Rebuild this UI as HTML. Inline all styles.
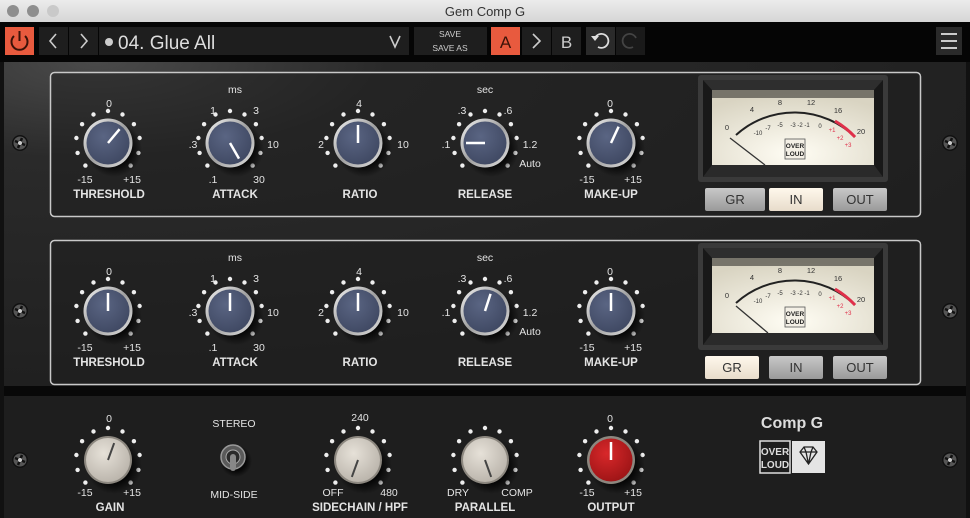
<!DOCTYPE html>
<html><head><meta charset="utf-8"><style>
html,body{margin:0;padding:0;width:970px;height:518px;overflow:hidden;background:#000}
svg{display:block}
text{font-family:"Liberation Sans",sans-serif}
</style></head><body>
<svg width="970" height="518" viewBox="0 0 970 518" xmlns="http://www.w3.org/2000/svg">
<defs>
<linearGradient id="tb" x1="0" y1="0" x2="0" y2="1"><stop offset="0" stop-color="#ececec"/><stop offset="1" stop-color="#d6d6d6"/></linearGradient>
<radialGradient id="panel" cx="0.1" cy="0" r="1"><stop offset="0" stop-color="#4a4a4a"/><stop offset="0.3" stop-color="#2a2a2a"/><stop offset="1" stop-color="#202020"/></radialGradient>
<linearGradient id="ring" x1="0" y1="0" x2="1" y2="1"><stop offset="0" stop-color="#f4f4f4"/><stop offset="0.5" stop-color="#a0a0a0"/><stop offset="1" stop-color="#e0e0e0"/></linearGradient>
<radialGradient id="blue" cx="0.4" cy="0.35" r="0.7"><stop offset="0" stop-color="#5a6583"/><stop offset="1" stop-color="#3f4862"/></radialGradient>
<radialGradient id="cream" cx="0.4" cy="0.35" r="0.7"><stop offset="0" stop-color="#e6e1d8"/><stop offset="1" stop-color="#b9b3aa"/></radialGradient>
<radialGradient id="red" cx="0.4" cy="0.35" r="0.7"><stop offset="0" stop-color="#d8282a"/><stop offset="1" stop-color="#9c1416"/></radialGradient>
<radialGradient id="face" cx="0.5" cy="0.85" r="0.8"><stop offset="0" stop-color="#fffdf4"/><stop offset="1" stop-color="#d9d4c2"/></radialGradient>
<radialGradient id="shadow" cx="0.5" cy="0.5" r="0.5"><stop offset="0.6" stop-color="#000" stop-opacity="0.8"/><stop offset="1" stop-color="#000" stop-opacity="0"/></radialGradient>
<linearGradient id="btn" x1="0" y1="0" x2="0" y2="1"><stop offset="0" stop-color="#c8c8c8"/><stop offset="1" stop-color="#9a9a9a"/></linearGradient>
<linearGradient id="btnOn" x1="0" y1="0" x2="0" y2="1"><stop offset="0" stop-color="#fff8ec"/><stop offset="1" stop-color="#e8dccb"/></linearGradient>
<g id="dots" fill="#eee">
<circle cx="-22.6" cy="22.6" r="2.2"/><circle cx="-30.4" cy="9.9" r="2.2"/><circle cx="-31.6" cy="-5" r="2.2"/><circle cx="-25.9" cy="-18.8" r="2.2"/><circle cx="-14.5" cy="-28.5" r="2.2"/><circle cx="0" cy="-32" r="2.2"/><circle cx="14.5" cy="-28.5" r="2.2"/><circle cx="25.9" cy="-18.8" r="2.2"/><circle cx="31.6" cy="-5" r="2.2"/><circle cx="30.4" cy="9.9" r="2.2"/><circle cx="22.6" cy="22.6" r="2.2"/>
</g>
<g id="kb"><circle cx="6" cy="6" r="28" fill="url(#shadow)"/><circle r="24.5" fill="url(#ring)"/><circle r="21.5" fill="url(#blue)"/></g>
<g id="kc"><circle cx="6" cy="6" r="28" fill="url(#shadow)"/><circle r="24" fill="#8c877f"/><circle r="22" fill="url(#cream)"/></g>
<g id="kr"><circle cx="6" cy="6" r="28" fill="url(#shadow)"/><circle r="24" fill="#8c877f"/><circle r="21.5" fill="url(#red)"/></g>
<g id="screw"><circle r="8" fill="#111"/><circle r="6.5" fill="#555"/><path d="M-5 -2 L5 2 M-2 5 L2 -5" stroke="#111" stroke-width="2.5"/><circle r="2" fill="#ccc"/></g>
</defs>

<rect x="0" y="0" width="970" height="22" fill="url(#tb)"/>
<circle cx="13" cy="11" r="6" fill="#8e8e8e"/><circle cx="33" cy="11" r="6" fill="#8e8e8e"/><circle cx="53" cy="11" r="6" fill="#c9c9c9"/>
<text x="485" y="16" text-anchor="middle" font-size="13" fill="#333">Gem Comp G</text>
<rect x="0" y="22" width="970" height="40" fill="#050505"/>
<rect x="5" y="27" width="29" height="28" fill="#e85a3e"/>
<path d="M14 36 A8 8 0 1 0 25 36" fill="none" stroke="#3a1208" stroke-width="2"/><line x1="19.5" y1="31" x2="19.5" y2="41" stroke="#3a1208" stroke-width="2"/>
<rect x="39" y="27" width="29" height="28" fill="#1e1e1e"/><rect x="69" y="27" width="29" height="28" fill="#1e1e1e"/>
<path d="M56 34 L50 41 L56 48" fill="none" stroke="#ccc" stroke-width="1.6"/><path d="M81 34 L87 41 L81 48" fill="none" stroke="#ccc" stroke-width="1.6"/>
<rect x="99" y="27" width="310" height="28" fill="#1e1e1e"/>
<circle cx="109" cy="42" r="4" fill="#ccc"/>
<text x="118" y="49" font-size="19" fill="#ddd">04. Glue All</text>
<path d="M390 36 L395 47 L400 36" fill="none" stroke="#ccc" stroke-width="1.6"/>
<rect x="414" y="27" width="73" height="28" fill="#1e1e1e"/>
<text x="450" y="37" text-anchor="middle" font-size="8.5" fill="#ccc">SAVE</text>
<text x="450" y="51" text-anchor="middle" font-size="8.5" fill="#ccc">SAVE AS</text>
<rect x="491" y="27" width="29" height="28" fill="#e85a3e"/>
<text x="505.5" y="48" text-anchor="middle" font-size="17" fill="#3a1208">A</text>
<rect x="522" y="27" width="29" height="28" fill="#1e1e1e"/>
<path d="M533 34 L540 41 L533 48" fill="none" stroke="#ccc" stroke-width="1.6"/>
<rect x="552" y="27" width="29" height="28" fill="#1e1e1e"/>
<text x="566.5" y="48" text-anchor="middle" font-size="17" fill="#ccc">B</text>
<rect x="586" y="27" width="29" height="28" fill="#2a2a2a"/>
<path d="M595 38 A7 7 0 1 1 598 47" fill="none" stroke="#ddd" stroke-width="1.8"/><path d="M591 36 L595 41 L599 36" fill="#ddd"/>
<rect x="616" y="27" width="29" height="28" fill="#1a1a1a"/>
<path d="M636 38 A7 7 0 1 0 633 47" fill="none" stroke="#444" stroke-width="1.8"/>
<rect x="936" y="27" width="26" height="28" fill="#2a2a2a"/>
<path d="M941 34 H957 M941 41 H957 M941 48 H957" stroke="#ccc" stroke-width="2"/>

<rect x="0" y="62" width="970" height="324" fill="url(#panel)"/>
<rect x="0" y="386" width="970" height="10" fill="#080808"/>
<rect x="0" y="396" width="970" height="122" fill="#1e1e1e"/>
<rect x="0" y="62" width="4" height="456" fill="#111"/><rect x="966" y="62" width="4" height="456" fill="#111"/>

<rect x="50.5" y="72.5" width="870" height="144" rx="4" fill="#1d1d1d" fill-opacity="0.5" stroke="#c8c8c8" stroke-width="1.5"/>
<rect x="50.5" y="240.5" width="870" height="144" rx="4" fill="#1d1d1d" fill-opacity="0.5" stroke="#c8c8c8" stroke-width="1.5"/>

<use href="#screw" x="20" y="143"/><use href="#screw" x="950" y="143"/>
<use href="#screw" x="20" y="311"/><use href="#screw" x="950" y="311"/>
<use href="#screw" x="20" y="460"/><use href="#screw" x="950" y="460"/>

<g fill="#e4e4e4" font-size="10.5" text-anchor="middle">
<g transform="translate(108,143)"><use href="#dots"/><use href="#kb"/><line x1="0" y1="0" x2="0" y2="-18" stroke="#fff" stroke-width="2.5" transform="rotate(40)"/></g>
<g transform="translate(230,143)"><use href="#dots"/><use href="#kb"/><line x1="0" y1="0" x2="0" y2="-18" stroke="#fff" stroke-width="2.5" transform="rotate(150)"/></g>
<g transform="translate(358,143)"><use href="#dots"/><use href="#kb"/><line x1="0" y1="0" x2="0" y2="-18" stroke="#fff" stroke-width="2.5"/></g>
<g transform="translate(485,143)"><use href="#dots"/><use href="#kb"/><line x1="0" y1="0" x2="0" y2="-19" stroke="#fff" stroke-width="2.5" transform="rotate(-90)"/></g>
<g transform="translate(611,143)"><use href="#dots"/><use href="#kb"/><line x1="0" y1="0" x2="0" y2="-18" stroke="#fff" stroke-width="2.5" transform="rotate(25)"/></g>
<text x="109" y="107">0</text><text x="85" y="183">-15</text><text x="132" y="183">+15</text>
<text x="235" y="93">ms</text><text x="213" y="114">1</text><text x="256" y="114">3</text><text x="193" y="148">.3</text><text x="273" y="148">10</text><text x="213" y="183">.1</text><text x="259" y="183">30</text>
<text x="359" y="107">4</text><text x="321" y="148">2</text><text x="403" y="148">10</text>
<text x="485" y="93">sec</text><text x="462" y="114">.3</text><text x="508" y="114">.6</text><text x="446" y="148">.1</text><text x="530" y="148">1.2</text><text x="530" y="167">Auto</text>
<text x="610" y="107">0</text><text x="587" y="183">-15</text><text x="633" y="183">+15</text>
<g font-weight="bold" font-size="11.5">
<text x="109" y="198">THRESHOLD</text><text x="235" y="198">ATTACK</text><text x="360" y="198">RATIO</text><text x="485" y="198">RELEASE</text><text x="611" y="198">MAKE-UP</text>
</g>

<g transform="translate(108,311)"><use href="#dots"/><use href="#kb"/><line x1="0" y1="0" x2="0" y2="-18" stroke="#fff" stroke-width="2.5"/></g>
<g transform="translate(230,311)"><use href="#dots"/><use href="#kb"/><line x1="0" y1="0" x2="0" y2="-18" stroke="#fff" stroke-width="2.5"/></g>
<g transform="translate(358,311)"><use href="#dots"/><use href="#kb"/><line x1="0" y1="0" x2="0" y2="-18" stroke="#fff" stroke-width="2.5"/></g>
<g transform="translate(485,311)"><use href="#dots"/><use href="#kb"/><line x1="0" y1="0" x2="0" y2="-18" stroke="#fff" stroke-width="2.5" transform="rotate(18)"/></g>
<g transform="translate(611,311)"><use href="#dots"/><use href="#kb"/><line x1="0" y1="0" x2="0" y2="-18" stroke="#fff" stroke-width="2.5"/></g>
<text x="109" y="275">0</text><text x="85" y="351">-15</text><text x="132" y="351">+15</text>
<text x="235" y="261">ms</text><text x="213" y="282">1</text><text x="256" y="282">3</text><text x="193" y="316">.3</text><text x="273" y="316">10</text><text x="213" y="351">.1</text><text x="259" y="351">30</text>
<text x="359" y="275">4</text><text x="321" y="316">2</text><text x="403" y="316">10</text>
<text x="485" y="261">sec</text><text x="462" y="282">.3</text><text x="508" y="282">.6</text><text x="446" y="316">.1</text><text x="530" y="316">1.2</text><text x="530" y="335">Auto</text>
<text x="610" y="275">0</text><text x="587" y="351">-15</text><text x="633" y="351">+15</text>
<g font-weight="bold" font-size="11.5">
<text x="109" y="366">THRESHOLD</text><text x="235" y="366">ATTACK</text><text x="360" y="366">RATIO</text><text x="485" y="366">RELEASE</text><text x="611" y="366">MAKE-UP</text>
</g>
</g>

<g id="meter">
<rect x="698" y="75" width="190" height="107" rx="3" fill="#3a3a3a"/>
<rect x="703" y="80" width="180" height="97" fill="#181818"/>
<path d="M703 80 H883 L874 90 H712 Z" fill="#2e2e2e"/>
<path d="M703 177 H883 L874 165 H712 Z" fill="#2a2a2a"/>
<rect x="712" y="90" width="162" height="75" fill="url(#face)"/>
<rect x="712" y="90" width="162" height="8" fill="#000" fill-opacity="0.45"/>
<path d="M736 135 A87 87 0 0 1 855 137" fill="none" stroke="#222" stroke-width="2"/>
<path d="M835 121 A87 87 0 0 1 855 137" fill="none" stroke="#e0304a" stroke-width="3"/>
<g font-size="7.5" fill="#333" text-anchor="middle">
<text x="727" y="130">0</text><text x="752" y="112">4</text><text x="780" y="105">8</text><text x="811" y="105">12</text><text x="838" y="113">16</text><text x="861" y="134">20</text>
<text x="758" y="135" font-size="6">-10</text><text x="768" y="130" font-size="6">-7</text><text x="780" y="127" font-size="6">-5</text><text x="800" y="127" font-size="6">-3 -2 -1</text><text x="820" y="128" font-size="6">0</text>
<text x="832" y="132" font-size="6" fill="#e0304a">+1</text><text x="840" y="140" font-size="6" fill="#e0304a">+2</text><text x="848" y="147" font-size="6" fill="#e0304a">+3</text>
</g>
<rect x="785" y="139" width="20" height="20" fill="#f4f0e6" stroke="#555" stroke-width="0.8"/>
<text x="795" y="148" text-anchor="middle" font-size="6.5" font-weight="bold" fill="#222">OVER</text><text x="795" y="156" text-anchor="middle" font-size="6.5" font-weight="bold" fill="#222">LOUD</text>
</g>
<line x1="730" y1="138" x2="765" y2="165" stroke="#333" stroke-width="1.3"/>
<use href="#meter" y="168"/>
<line x1="736" y1="306" x2="768" y2="333" stroke="#333" stroke-width="1.3"/>

<g font-size="13" text-anchor="middle" fill="#333">
<rect x="705" y="188" width="60" height="23" rx="2" fill="url(#btn)"/><text x="735" y="204">GR</text>
<rect x="769" y="188" width="54" height="23" rx="2" fill="url(#btnOn)"/><text x="796" y="204">IN</text>
<rect x="833" y="188" width="54" height="23" rx="2" fill="url(#btn)"/><text x="860" y="204">OUT</text>
<rect x="705" y="356" width="54" height="23" rx="2" fill="url(#btnOn)"/><text x="732" y="372">GR</text>
<rect x="769" y="356" width="54" height="23" rx="2" fill="url(#btn)"/><text x="796" y="372">IN</text>
<rect x="833" y="356" width="54" height="23" rx="2" fill="url(#btn)"/><text x="860" y="372">OUT</text>
</g>

<g fill="#e4e4e4" font-size="10.5" text-anchor="middle">
<g transform="translate(108,460)"><use href="#dots"/><use href="#kc"/><line x1="0" y1="0" x2="0" y2="-18" stroke="#444" stroke-width="2" transform="rotate(20)"/></g>
<g transform="translate(358,460)"><use href="#dots"/><use href="#kc"/><line x1="0" y1="0" x2="0" y2="-18" stroke="#444" stroke-width="2" transform="rotate(200)"/></g>
<g transform="translate(485,460)"><use href="#dots"/><use href="#kc"/><line x1="0" y1="0" x2="0" y2="-18" stroke="#444" stroke-width="2" transform="rotate(160)"/></g>
<g transform="translate(611,460)"><use href="#dots"/><use href="#kr"/><line x1="0" y1="0" x2="0" y2="-18" stroke="#fff" stroke-width="2.5"/></g>
<circle cx="236" cy="461" r="16" fill="url(#shadow)"/>
<circle cx="233" cy="457" r="12" fill="#5a5a5a" stroke="#999" stroke-width="1.5"/>
<circle cx="233" cy="457" r="7" fill="#2a2a2a" stroke="#aaa" stroke-width="1"/>
<rect x="230" y="454" width="6" height="17" rx="3" fill="#888"/>
<text x="109" y="422">0</text><text x="85" y="496">-15</text><text x="132" y="496">+15</text>
<text x="234" y="427">STEREO</text><text x="234" y="498">MID-SIDE</text>
<text x="360" y="421">240</text><text x="333" y="496">OFF</text><text x="389" y="496">480</text>
<text x="458" y="496">DRY</text><text x="517" y="496">COMP</text>
<text x="610" y="422">0</text><text x="587" y="496">-15</text><text x="633" y="496">+15</text>
<g font-weight="bold" font-size="11.5">
<text x="110" y="511">GAIN</text><text x="360" y="511">SIDECHAIN / HPF</text><text x="485" y="511">PARALLEL</text><text x="611" y="511">OUTPUT</text>
</g>
<text x="792" y="428" font-size="16" font-weight="bold" fill="#ddd">Comp G</text>
</g>
<rect x="760" y="441" width="30" height="32" fill="#1e1e1e" stroke="#ddd" stroke-width="1.5"/>
<text x="775" y="455" text-anchor="middle" font-size="10" font-weight="bold" fill="#ddd">OVER</text>
<text x="775" y="468" text-anchor="middle" font-size="10" font-weight="bold" fill="#ddd">LOUD</text>
<rect x="792" y="441" width="33" height="32" fill="#e4e4e4"/>
<path d="M800 452 L804 447 L813 447 L817 452 L808.5 464 Z M800 452 H817 M804 447 L806 452 L808.5 464 M813 447 L811 452 L808.5 464" fill="none" stroke="#222" stroke-width="1.3"/>
</svg>
</body></html>
